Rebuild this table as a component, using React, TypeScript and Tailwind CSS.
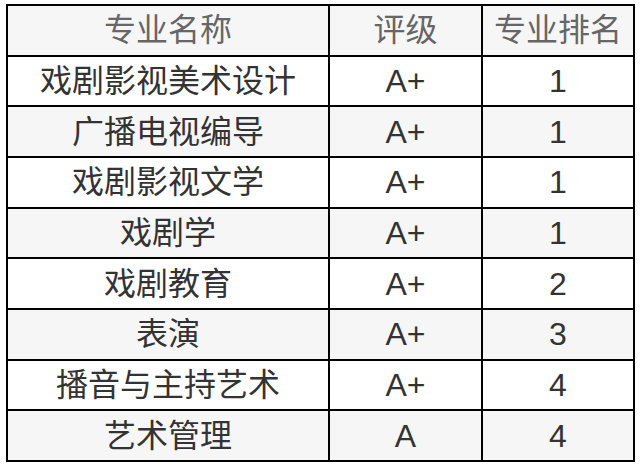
import React from "react";

const rows: [string, string, string][] = [
  ["戏剧影视美术设计", "A+", "1"],
  ["广播电视编导", "A+", "1"],
  ["戏剧影视文学", "A+", "1"],
  ["戏剧学", "A+", "1"],
  ["戏剧教育", "A+", "2"],
  ["表演", "A+", "3"],
  ["播音与主持艺术", "A+", "4"],
  ["艺术管理", "A", "4"],
];

export default function App() {
  return (
    <div className="w-[640px] h-[466px] bg-white pt-[4px] pl-[6px]">
      <div
        className="w-[629px] h-[458px] bg-black p-[2px] grid grid-cols-[320px_151px_150px] grid-rows-9 gap-[2px] text-[32px] leading-none"
        style={{ fontFamily: '"Liberation Sans", "Noto Sans CJK SC", sans-serif' }}
      >
        {["专业名称", "评级", "专业排名"].map((h) => (
          <div key={h} className="bg-[#f6f6f6] text-[#666666] flex items-center justify-center">
            {h}
          </div>
        ))}
        {rows.map((r, i) =>
          r.map((c, j) => (
            <div
              key={`${i}-${j}`}
              className={`${i % 2 === 0 ? "bg-white" : "bg-[#f6f6f6]"} text-[#333333] flex items-center justify-center`}
            >
              {c}
            </div>
          ))
        )}
      </div>
    </div>
  );
}
